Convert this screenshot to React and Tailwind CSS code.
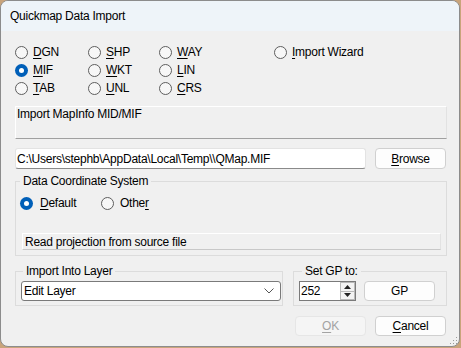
import React from "react";

const FONT = { fontFamily: '"Liberation Sans", Arial, sans-serif' };

// label with one underlined accelerator letter
function Acc({ text, i }) {
  return (
    <>
      {text.slice(0, i)}
      <span className="underline underline-offset-[2px]">{text[i]}</span>
      {text.slice(i + 1)}
    </>
  );
}

function Radio({ text, u = 0, checked = false, gap = "ml-[5px]" }) {
  return (
    <div className="flex items-center h-[18px]">
      {checked ? (
        <span className="w-[13px] h-[13px] rounded-full bg-[#005fb8] flex items-center justify-center shrink-0">
          <span className="w-[5px] h-[5px] rounded-full bg-white" />
        </span>
      ) : (
        <span className="w-[13px] h-[13px] rounded-full border border-[#5e5e5e] bg-[#f7f7f7] shrink-0" />
      )}
      <span className={`${gap} leading-[14px]`}>
        <Acc text={text} i={u} />
      </span>
    </div>
  );
}

function Button({ children, disabled = false }) {
  return (
    <div
      className={`w-[71px] h-[20px] rounded-[4px] border flex items-center justify-center leading-[14px] ${
        disabled
          ? "border-[#e6e6e6] bg-[#f5f5f5] text-[#a3a3a3]"
          : "border-[#d0d0d0] bg-[#fdfdfd]"
      }`}
    >
      {children}
    </div>
  );
}

export default function App() {
  return (
    <div className="w-[461px] h-[348px] bg-[#c9a47b] overflow-hidden text-[12px] tracking-[-0.25px] text-black" style={FONT}>
      <div className="relative w-[460px] h-[347px] bg-[#f0f0f0] border border-[#8c8c8c] rounded-[8px] overflow-hidden flex flex-col">
        {/* Title bar */}
        <div className="h-[30px] bg-[#eef4f9] flex items-center pl-[9px] shrink-0">
          <span className="leading-[14px]">Quickmap Data Import</span>
        </div>

        {/* Body */}
        <div className="flex flex-col pl-[14px] pr-[12px]">
          {/* Format radios */}
          <div className="mt-[12px] grid grid-cols-[73px_71px_115px_auto] auto-rows-[18px]">
            <Radio text="DGN" />
            <Radio text="SHP" />
            <Radio text="WAY" />
            <Radio text="Import Wizard" />
            <Radio text="MIF" checked />
            <Radio text="WKT" />
            <Radio text="LIN" />
            <div />
            <Radio text="TAB" />
            <Radio text="UNL" />
            <Radio text="CRS" />
            <div />
          </div>

          {/* Description */}
          <div className="mt-[9px] h-[33px] border-t border-l border-t-white border-l-white border-r border-r-[#e2e2e2] border-b border-b-[#a0a0a0] pl-[1px] leading-[14px]">
            Import MapInfo MID/MIF
          </div>

          {/* File path */}
          <div className="mt-[9px] flex gap-[9px] h-[21px]">
            <div className="w-[351px] bg-white border border-[#e3e3e3] border-b-[#8a8a8a] rounded-[3px] pl-[1px] flex items-center leading-[14px]">
              C:\Users\stephb\AppData\Local\Temp\\QMap.MIF
            </div>
            <div className="h-[21px] w-[71px] rounded-[4px] border border-[#d0d0d0] bg-[#fdfdfd] flex items-center justify-center leading-[14px]">
              <Acc text="Browse" i={0} />
            </div>
          </div>

          {/* Data Coordinate System */}
          <fieldset className="mt-[5px] w-[432px] border border-[#dcdcdc] px-[4px] pb-[5px]">
            <legend className="px-[3px] leading-[14px]">Data Coordinate System</legend>
            <div className="mt-[6px] flex">
              <div className="w-[81px]">
                <Radio text="Default" checked gap="ml-[7px]" />
              </div>
              <Radio text="Other" u={4} gap="ml-[6px]" />
            </div>
            <div className="mt-[21px] ml-[2px] w-[419px] h-[17px] border-t border-l border-t-white border-l-white border-r border-r-[#e2e2e2] border-b border-b-[#c8c8c8] pl-[2px] flex items-center leading-[14px]">
              Read projection from source file
            </div>
          </fieldset>

          {/* Layer + GP */}
          <div className="mt-[8px] flex gap-[10px] items-start">
            <fieldset className="w-[268px] border border-[#dcdcdc] pl-[5px] pb-[4px]">
              <legend className="ml-[2px] px-[3px] leading-[14px]">Import Into Layer</legend>
              <div className="mt-[3px] w-[260px] h-[20px] bg-white border border-[#7a7a7a] rounded-[3px] flex items-center pl-[2px] pr-[6px]">
                <span className="flex-1 leading-[14px]">Edit Layer</span>
                <svg width="10" height="6" viewBox="0 0 10 6" fill="none" stroke="#555" strokeWidth="1">
                  <path d="M0.5 0.5 L5 5 L9.5 0.5" />
                </svg>
              </div>
            </fieldset>

            <fieldset className="w-[154px] border border-[#dcdcdc] pl-[5px] pb-[4px]">
              <legend className="ml-[3px] px-[3px] leading-[14px]">Set GP to:</legend>
              <div className="mt-[3px] flex gap-[8px]">
                <div className="w-[57px] h-[20px] bg-white border border-[#7a7a7a] flex">
                  <span className="flex-1 pl-[1px] leading-[18px]">252</span>
                  <div className="w-[15px] flex flex-col">
                    <div className="flex-1 bg-[#f3f3f3] border border-[#b9b9b9] flex items-center justify-center">
                      <svg width="7" height="4" viewBox="0 0 7 4"><path d="M3.5 0 L7 4 L0 4 Z" fill="#222" /></svg>
                    </div>
                    <div className="flex-1 bg-[#f3f3f3] border border-t-0 border-[#b9b9b9] flex items-center justify-center">
                      <svg width="7" height="4" viewBox="0 0 7 4"><path d="M0 0 L7 0 L3.5 4 Z" fill="#222" /></svg>
                    </div>
                  </div>
                </div>
                <Button>GP</Button>
              </div>
            </fieldset>
          </div>

          {/* Dialog buttons */}
          <div className="mt-[10px] flex justify-end gap-[9px] pr-[1px]">
            <Button disabled>
              <Acc text="OK" i={0} />
            </Button>
            <Button>
              <Acc text="Cancel" i={0} />
            </Button>
          </div>
        </div>

        {/* size grip */}
        <svg className="absolute right-[1px] bottom-[1px]" width="8" height="8" viewBox="0 0 8 8" fill="#9a9a9a">
          <rect x="6" y="0" width="1" height="1" />
          <rect x="3" y="3" width="1" height="1" />
          <rect x="6" y="3" width="1" height="1" />
          <rect x="0" y="6" width="1" height="1" />
          <rect x="3" y="6" width="1" height="1" />
          <rect x="6" y="6" width="1" height="1" />
        </svg>
      </div>
    </div>
  );
}
